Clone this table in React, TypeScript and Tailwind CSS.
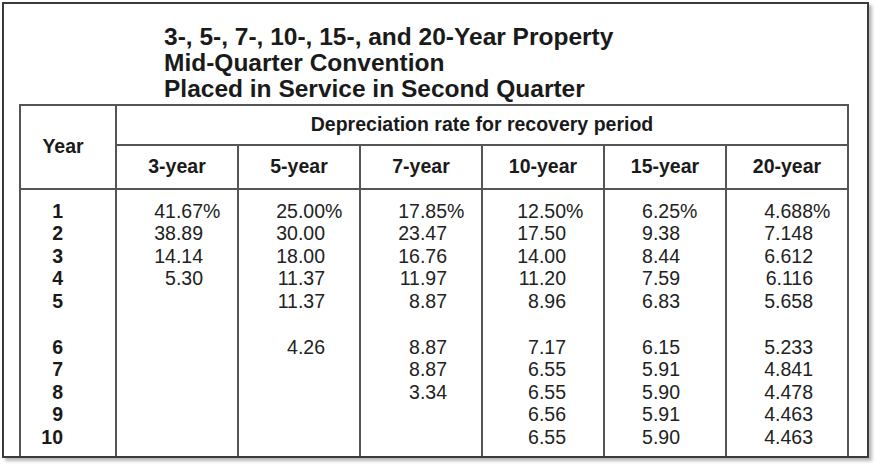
import React from 'react'

type Col = { label: string; pad: string; box: string; values: (string | null)[] }

// each value: number text; '%' appended on first row
const cols: Col[] = [
  { label: '3-year', pad: 'pl-[37px]', box: 'w-[49px]', values: ['41.67', '38.89', '14.14', '5.30', null, null, null, null, null, null] },
  { label: '5-year', pad: 'pl-[37px]', box: 'w-[49px]', values: ['25.00', '30.00', '18.00', '11.37', '11.37', '4.26', null, null, null, null] },
  { label: '7-year', pad: 'pl-[37px]', box: 'w-[49px]', values: ['17.85', '23.47', '16.76', '11.97', '8.87', '8.87', '8.87', '3.34', null, null] },
  { label: '10-year', pad: 'pl-[34px]', box: 'w-[49px]', values: ['12.50', '17.50', '14.00', '11.20', '8.96', '7.17', '6.55', '6.55', '6.56', '6.55'] },
  { label: '15-year', pad: 'pl-[37px]', box: 'w-[38px]', values: ['6.25', '9.38', '8.44', '7.59', '6.83', '6.15', '5.91', '5.90', '5.91', '5.90'] },
  { label: '20-year', pad: 'pl-[37px]', box: 'w-[49px]', values: ['4.688', '7.148', '6.612', '6.116', '5.658', '5.233', '4.841', '4.478', '4.463', '4.463'] },
]

const years = ['1', '2', '3', '4', '5', '6', '7', '8', '9', '10']

function Rows({ render }: { render: (i: number) => React.ReactNode }) {
  return (
    <div className="pt-[10px]">
      {years.slice(0, 5).map((_, i) => (
        <div key={i} className="h-[22.4px] leading-[22.4px]">{render(i)}</div>
      ))}
      <div className="h-[24px]" />
      {years.slice(5).map((_, j) => (
        <div key={j + 5} className="h-[22.4px] leading-[22.4px]">{render(j + 5)}</div>
      ))}
    </div>
  )
}

export default function App() {
  return (
    <div className="w-[877px] h-[464px] bg-white font-['Liberation_Sans',Arial,sans-serif] text-[#1a1a1a] pt-[2px] pl-[2px]">
      <div className="w-[867px] h-[456px] border-2 border-[#3a3a3a] bg-white flex flex-col shadow-[3px_3px_3px_rgba(0,0,0,0.28)]">
        {/* Title */}
        <div className="h-[100px] pt-[20px] pl-[160px] text-[24.5px] leading-[26px] font-bold">
          <div>3-, 5-, 7-, 10-, 15-, and 20-Year Property</div>
          <div>Mid-Quarter Convention</div>
          <div>Placed in Service in Second Quarter</div>
        </div>

        {/* Table */}
        <div className="ml-[15px] w-[830px] flex-1 border-x-2 border-t-2 border-[#555] flex flex-col text-[19.5px]">
          <div className="flex border-b-2 border-[#555] h-[84px]">
            <div className="w-[94px] flex items-center justify-center pr-[10px] font-bold">Year</div>
            <div className="flex-1 flex flex-col border-l-2 border-[#555]">
              <div className="h-[40px] flex items-center justify-center font-bold border-b-2 border-[#555]">
                Depreciation rate for recovery period
              </div>
              <div className="flex-1 flex">
                {cols.map((c, i) => (
                  <div
                    key={c.label}
                    className={`flex items-center justify-center font-bold ${i > 0 ? 'w-[122px] border-l-2 border-[#555]' : 'w-[120px]'}`}
                  >
                    {c.label}
                  </div>
                ))}
              </div>
            </div>
          </div>

          <div className="flex-1 flex">
            <div className="w-[94px] pr-[52px] text-right font-bold">
              <Rows render={(i) => years[i]} />
            </div>
            {cols.map((c) => (
              <div key={c.label} className={`w-[122px] border-l-2 border-[#555] text-[#222] ${c.pad}`}>
                <Rows
                  render={(i) =>
                    c.values[i] ? (
                      <div className="flex">
                        <span className={`${c.box} text-right`}>{c.values[i]}</span>
                        {i === 0 && <span>%</span>}
                      </div>
                    ) : null
                  }
                />
              </div>
            ))}
          </div>
        </div>
      </div>
    </div>
  )
}
